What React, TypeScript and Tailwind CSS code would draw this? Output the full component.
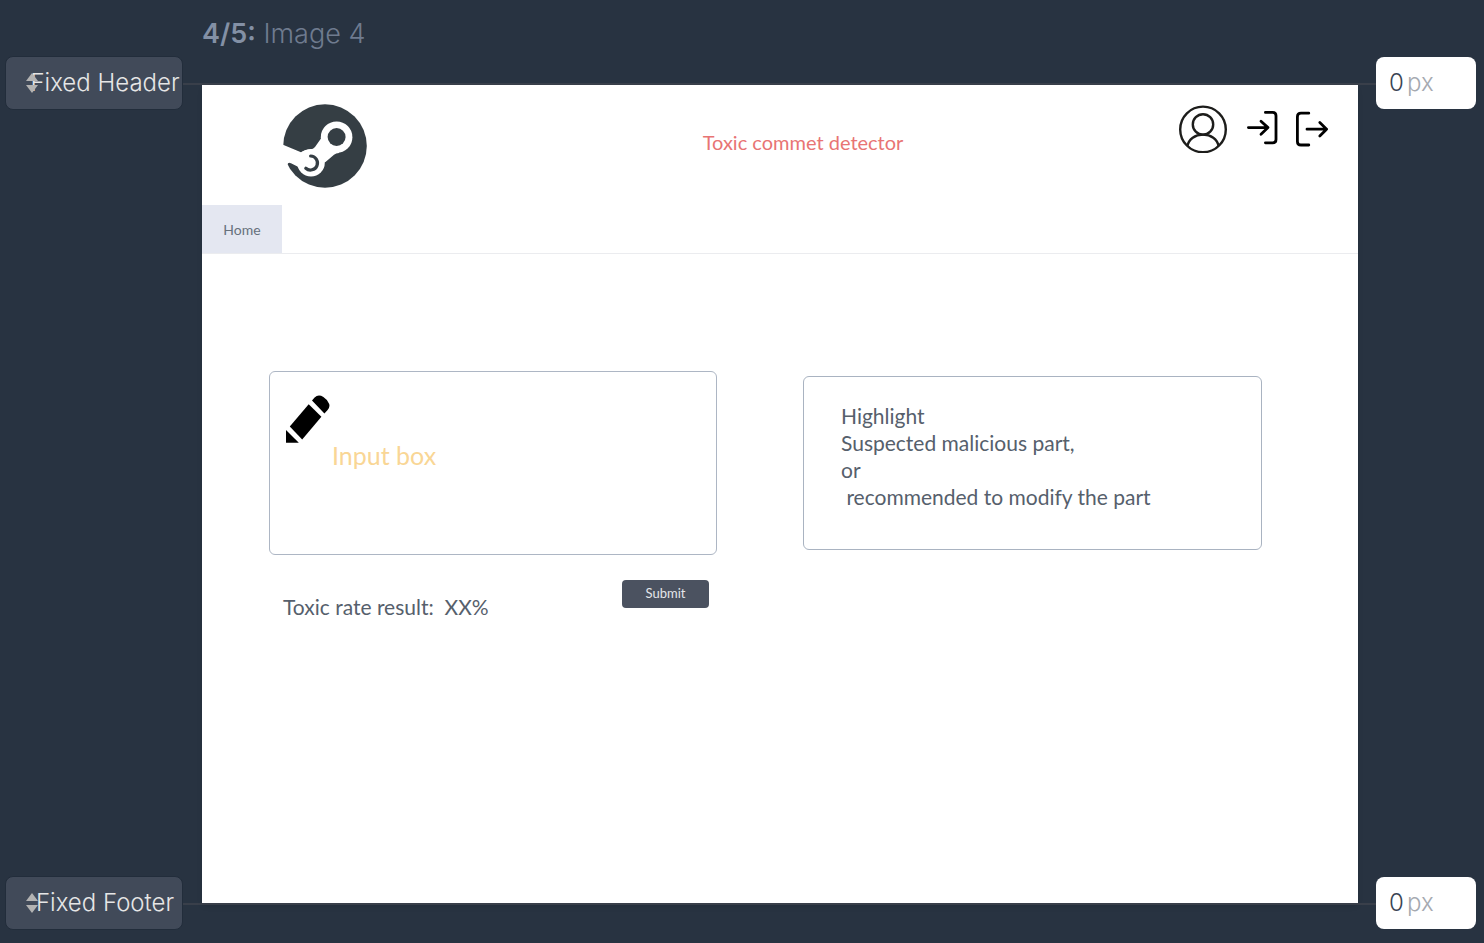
import React from "react";

function SteamLogo() {
  return (
    <svg viewBox="0 0 84 84" className="size-[84px] shrink-0" role="img" aria-label="Steam">
      <circle cx="42" cy="42" r="41.8" fill="#353e44" />
      <path
        d="M-1 40.2 L18 48.3 Q21 45.6 28 45.4 Q30.5 45 32 43 L38 34.5 L53.5 33.3 L56 49 Q53 49 51 50.8 L42.5 58 L28 62 L15.5 63 L8 59.2 Q5 57.6 4.5 60.5 L-1 62 Z"
        fill="#fff"
      />
      <circle cx="53.6" cy="33.2" r="15.8" fill="#fff" />
      <circle cx="53.6" cy="33" r="9" fill="#353e44" />
      <circle cx="28" cy="58.8" r="13.8" fill="#fff" />
      <path
        d="M27.6 52 A7 7 0 1 1 22.8 64.2"
        fill="none"
        stroke="#353e44"
        strokeWidth="3.2"
        strokeLinecap="round"
      />
    </svg>
  );
}

function UserIcon() {
  return (
    <svg viewBox="0 0 48 48" className="size-12" fill="none" stroke="#1d1d1b" strokeWidth="2.4" aria-hidden="true">
      <circle cx="24" cy="24.4" r="22.8" />
      <circle cx="24" cy="19.4" r="10.2" />
      <path d="M8.4 41 C9.8 34 16 29.6 24 29.6 S38.2 34 39.6 41" />
    </svg>
  );
}

function LoginIcon() {
  return (
    <svg viewBox="0 0 34 38" className="h-[38px] w-[34px]" fill="none" stroke="#000" strokeWidth="2.8" strokeLinecap="round" strokeLinejoin="round" aria-hidden="true">
      <path d="M2.4 17.6 H22 M15 11.2 L22 17.6 L15 24.2" />
      <path d="M19.4 2.4 H26.6 Q30 2.4 30 5.8 V29.4 Q30 32.8 26.6 32.8 H19.4" />
    </svg>
  );
}

function LogoutIcon() {
  return (
    <svg viewBox="0 0 34 38" className="h-[38px] w-[34px]" fill="none" stroke="#000" strokeWidth="2.8" strokeLinecap="round" strokeLinejoin="round" aria-hidden="true">
      <path d="M12 19.2 H31.6 M24.8 12.6 L31.6 19.2 L24.8 26" />
      <path d="M13.8 3.2 H6 Q2.4 3.2 2.4 6.8 V31.4 Q2.4 35 6 35 H13.8" />
    </svg>
  );
}

function PencilIcon() {
  return (
    <svg viewBox="0 0 44 48" className="h-12 w-11 shrink-0" fill="#000" aria-hidden="true">
      <path d="M0 35 L12.8 47.8 H0 Z" />
      <path d="M3.8 31.6 L22.7 9.2 L35.4 21.8 L16.2 44.4 Z" />
      <path d="M26 5.4 L28.6 2.4 Q32.4 -1 37.4 2 Q41.8 4.8 43.2 9 Q44.2 12.6 41.4 15.2 L38.4 18.4 Z" />
    </svg>
  );
}

function PositionSelect({ label }: { label: string }) {
  return (
    <div className="flex w-full pl-[5px]">
      <div className="grid w-[178px] items-center">
        <select
          aria-label={`${label} position`}
          className="col-start-1 row-start-1 h-[54px] w-full appearance-none rounded-lg border border-[#222d3b] bg-[#414a59] pl-[22px] text-center font-['Inter',sans-serif] text-[24px] font-light text-[#e6e6e6]"
        >
          <option>{label}</option>
        </select>
        <svg viewBox="0 0 12 20" className="pointer-events-none col-start-1 row-start-1 ml-[21px] h-5 w-3" fill="#b3b3b3" aria-hidden="true">
          <path d="M0 8 L6 0 L12 8 Z M0 12 L6 20 L12 12 Z" />
        </svg>
      </div>
      <div className="mt-[27px] h-[2px] flex-1 bg-[#393f4a]" />
    </div>
  );
}

function SizeField({ label }: { label: string }) {
  return (
    <div className="flex w-full pr-2">
      <div className="mt-[26px] h-[2px] flex-1 bg-[#393f4a]" />
      <label className="flex h-[52px] w-[100px] items-center rounded-lg bg-white pl-[13px] font-['Inter',sans-serif] text-[24px] font-light text-[#a5a9b0]">
        <input
          aria-label={label}
          defaultValue="0"
          inputMode="numeric"
          className="w-[18px] bg-transparent text-[#3a4452] outline-none"
        />
        px
      </label>
    </div>
  );
}

export default function App() {
  return (
    <div className="grid min-h-screen grid-cols-[202px_1fr_126px] bg-[#283341] font-['Lato',sans-serif]">
      <aside className="flex flex-col justify-between pt-14 pb-[13px]">
        <PositionSelect label="Fixed Header" />
        <PositionSelect label="Fixed Footer" />
      </aside>

      <div className="flex flex-col">
        <h1 className="h-[85px] border-b-2 border-[#393f4a] pt-[17px] font-['Inter',sans-serif] text-[27px] leading-[34px] font-light text-[#6f7b8f]">
          <b className="font-semibold text-[#8390a5]">4/5:</b> Image 4
        </h1>

        <div className="flex flex-1 flex-col bg-white shadow-md">
          <header className="flex h-[120px] items-start pr-[29px] pl-[81px]">
            <div className="pt-[19px]">
              <SteamLogo />
            </div>
            <h2 className="flex-1 pt-[43px] pl-[60px] text-center text-[20px] leading-7 text-[#e87474]">
              Toxic commet detector
            </h2>
            <div className="flex items-start gap-[19px] pt-5">
              <button type="button" aria-label="Profile">
                <UserIcon />
              </button>
              <div className="flex gap-[15px] pt-[5px]">
                <button type="button" aria-label="Log in">
                  <LoginIcon />
                </button>
                <button type="button" aria-label="Log out">
                  <LogoutIcon />
                </button>
              </div>
            </div>
          </header>

          <nav className="flex border-b border-[#ebecef]">
            <a href="#home" className="flex h-12 w-20 items-center justify-center bg-[#e4e7f1] text-[14px] text-[#67717c]">
              Home
            </a>
          </nav>

          <main className="grid grid-cols-[448fr_459fr] items-start gap-[86px] pt-[117px] pr-24 pl-[67px]">
            <form onSubmit={(e) => e.preventDefault()}>
              <label className="flex h-[184px] rounded-md border border-[#adb6c4] pt-[23px] pl-4">
                <PencilIcon />
                <textarea
                  aria-label="Comment"
                  placeholder="Input box"
                  className="min-w-0 flex-1 resize-none bg-transparent pt-11 pl-[2px] text-[25px] leading-8 text-[#56606c] outline-none placeholder:text-[#f9d695]"
                />
              </label>
              <div className="flex items-start justify-between pt-[25px] pr-2 pl-[14px]">
                <p className="pt-[13px] text-[21px] leading-7 whitespace-pre text-[#56606c]">
                  Toxic rate result:{"  "}XX%
                </p>
                <button type="submit" className="h-7 w-[87px] rounded bg-[#4b5260] text-[13px] text-[#e4e6ea]">
                  Submit
                </button>
              </div>
            </form>

            <section className="mt-[5px] h-[174px] rounded-md border border-[#a9b3c1] pt-[25px] pl-[37px]">
              <p className="text-[21px] leading-[27px] whitespace-pre text-[#56606c]">
                {"Highlight\nSuspected malicious part,\nor\n recommended to modify the part"}
              </p>
            </section>
          </main>
        </div>

        <div className="h-10 border-t-2 border-[#393f4a]" />
      </div>

      <aside className="flex flex-col justify-between pt-[57px] pb-[14px]">
        <SizeField label="Fixed header height" />
        <SizeField label="Fixed footer height" />
      </aside>
    </div>
  );
}
